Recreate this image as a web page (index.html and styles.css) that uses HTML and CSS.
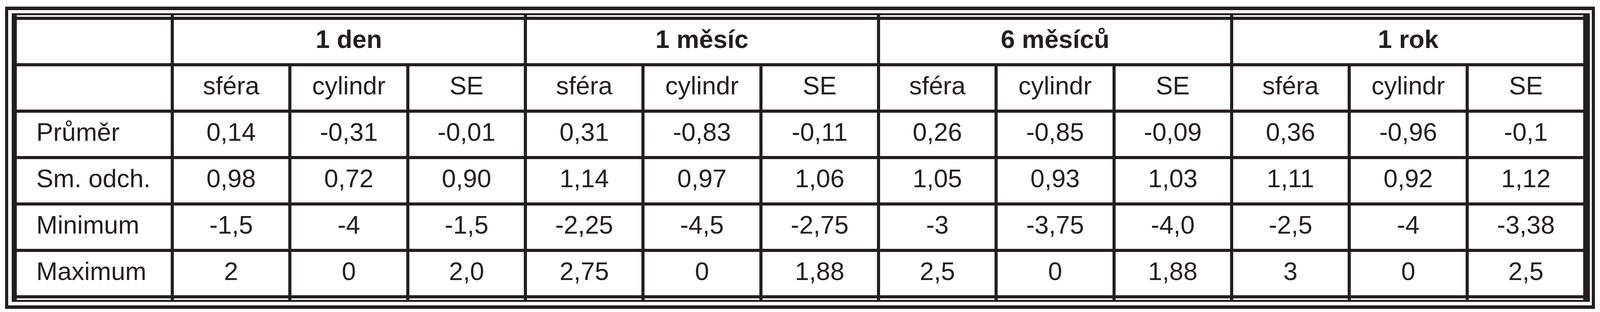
FILE: index.html
```html
<!DOCTYPE html>
<html lang="cs">
<head>
<meta charset="utf-8">
<title>Tabulka</title>
<link rel="stylesheet" href="styles.css">
</head>
<body>
<div class="frame">
  <div class="inner">
    <div class="grid">
      <div class="sp"></div><div class="sp g"></div><div class="sp g"></div><div class="sp g"></div><div class="sp g"></div>

      <div class="c lab"></div>
      <div class="c g b">1 den</div>
      <div class="c g b">1 měsíc</div>
      <div class="c g b">6 měsíců</div>
      <div class="c g b">1 rok</div>

      <div class="c lab"></div>
      <div class="c">sféra</div><div class="c">cylindr</div><div class="c">SE</div>
      <div class="c">sféra</div><div class="c">cylindr</div><div class="c">SE</div>
      <div class="c">sféra</div><div class="c">cylindr</div><div class="c">SE</div>
      <div class="c">sféra</div><div class="c">cylindr</div><div class="c">SE</div>

      <div class="c lab">Průměr</div>
      <div class="c">0,14</div><div class="c">-0,31</div><div class="c">-0,01</div>
      <div class="c">0,31</div><div class="c">-0,83</div><div class="c">-0,11</div>
      <div class="c">0,26</div><div class="c">-0,85</div><div class="c">-0,09</div>
      <div class="c">0,36</div><div class="c">-0,96</div><div class="c">-0,1</div>

      <div class="c lab">Sm. odch.</div>
      <div class="c">0,98</div><div class="c">0,72</div><div class="c">0,90</div>
      <div class="c">1,14</div><div class="c">0,97</div><div class="c">1,06</div>
      <div class="c">1,05</div><div class="c">0,93</div><div class="c">1,03</div>
      <div class="c">1,11</div><div class="c">0,92</div><div class="c">1,12</div>

      <div class="c lab">Minimum</div>
      <div class="c">-1,5</div><div class="c">-4</div><div class="c">-1,5</div>
      <div class="c">-2,25</div><div class="c">-4,5</div><div class="c">-2,75</div>
      <div class="c">-3</div><div class="c">-3,75</div><div class="c">-4,0</div>
      <div class="c">-2,5</div><div class="c">-4</div><div class="c">-3,38</div>

      <div class="c lab">Maximum</div>
      <div class="c">2</div><div class="c">0</div><div class="c">2,0</div>
      <div class="c">2,75</div><div class="c">0</div><div class="c">1,88</div>
      <div class="c">2,5</div><div class="c">0</div><div class="c">1,88</div>
      <div class="c">3</div><div class="c">0</div><div class="c">2,5</div>

      <div class="sp"></div><div class="sp"></div><div class="sp"></div><div class="sp"></div><div class="sp"></div><div class="sp"></div><div class="sp"></div><div class="sp"></div><div class="sp"></div><div class="sp"></div><div class="sp"></div><div class="sp"></div><div class="sp"></div>
    </div>
  </div>
</div>
</body>
</html>
```
FILE: styles.css
```css
html, body {
  margin: 0;
  background: #ffffff;
}
body {
  padding: 17px 13px 0 13px;
  font-family: "Liberation Sans", Arial, sans-serif;
  color: #231f20;
}
.frame {
  border-style: solid;
  border-color: #231f20;
  border-width: 9px 8px 9px 8px;
  padding: 8px 5px 9px 9px;
  background: #ffffff;
}
.inner {
  border-style: solid;
  border-color: #231f20;
  border-width: 5px 17px 5px 13px;
}
.grid {
  display: grid;
  grid-template-columns: 394px repeat(12, 1fr);
  grid-template-rows: 4px repeat(6, 111px) 4px;
  gap: 8px;
  background: #231f20;
}
.sp {
  background: #ffffff;
}
.g {
  grid-column: span 3;
}
.c {
  background: #ffffff;
  display: flex;
  align-items: center;
  justify-content: center;
  padding-bottom: 12px;
  box-sizing: border-box;
  font-size: 65px;
  white-space: nowrap;
}
.lab {
  justify-content: flex-start;
  padding-left: 50px;
}
.b {
  font-weight: bold;
}
```
